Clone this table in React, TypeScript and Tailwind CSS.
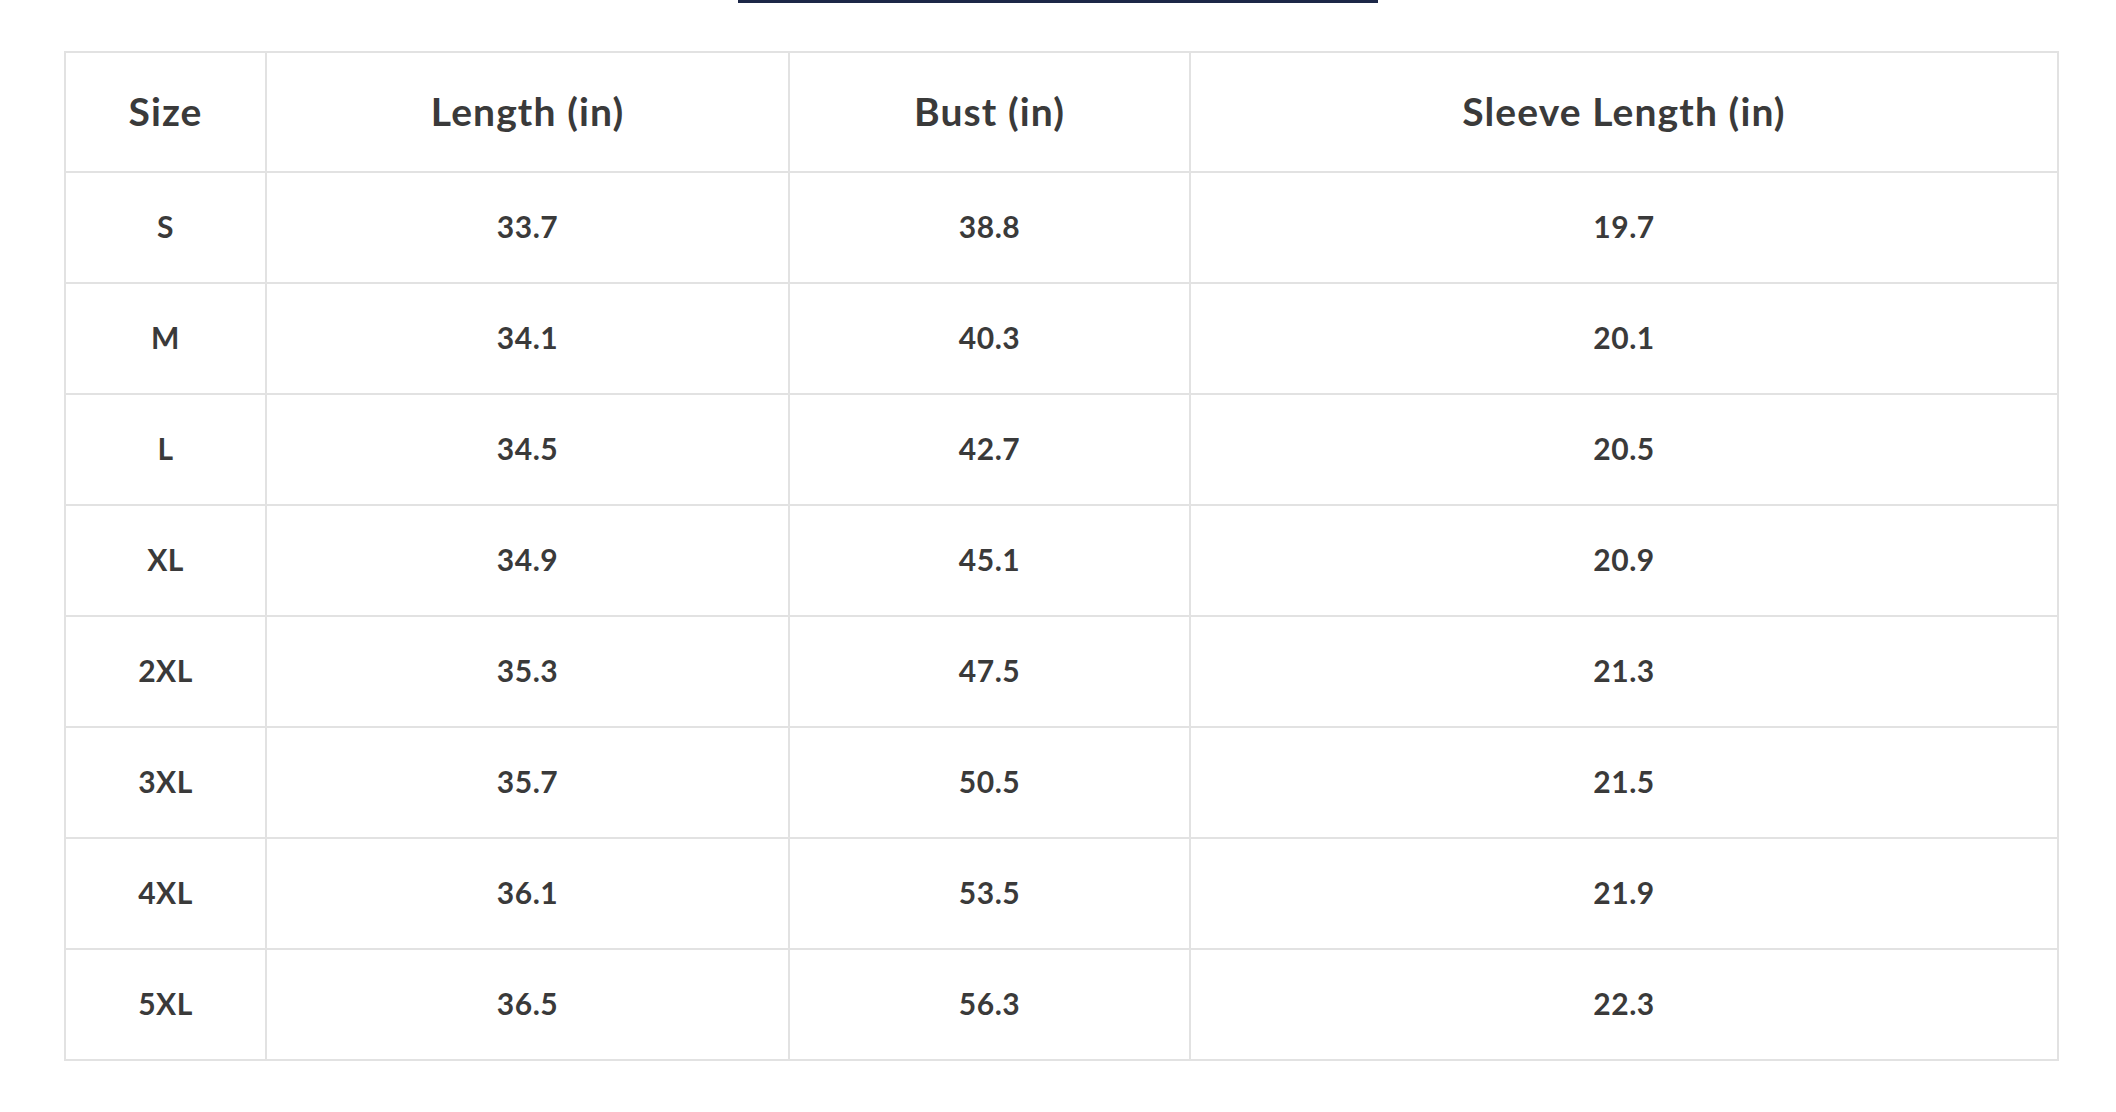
import React from "react";

const headers = ["Size", "Length (in)", "Bust (in)", "Sleeve Length (in)"];
const rows: string[][] = [
  ["S", "33.7", "38.8", "19.7"],
  ["M", "34.1", "40.3", "20.1"],
  ["L", "34.5", "42.7", "20.5"],
  ["XL", "34.9", "45.1", "20.9"],
  ["2XL", "35.3", "47.5", "21.3"],
  ["3XL", "35.7", "50.5", "21.5"],
  ["4XL", "36.1", "53.5", "21.9"],
  ["5XL", "36.5", "56.3", "22.3"],
];

export default function App() {
  return (
    <div className="w-[2116px] h-[1112px] bg-white flex flex-col text-[#3a3a3a]" style={{ fontFamily: "Lato, 'Noto Sans', sans-serif" }}>
      <div className="mx-auto w-[640px] h-[3px] bg-[#1c2747]" />
      <div className="ml-[64px] mt-[48px] w-[1995px] grid grid-cols-[201px_523px_401px_868px] border-t-2 border-l-2 border-[#e2e2e2]">
        {headers.map((h) => (
          <div key={h} className="h-[120px] flex items-center justify-center pb-[2px] border-r-2 border-b-2 border-[#e2e2e2] text-[39px] leading-none font-bold tracking-[1.1px]">
            {h}
          </div>
        ))}
        {rows.map((r) =>
          r.map((c, i) => (
            <div key={r[0] + i} className="h-[111px] flex items-center justify-center pb-[3px] border-r-2 border-b-2 border-[#e2e2e2] text-[30px] leading-none font-bold tracking-[0.5px]">
              {c}
            </div>
          ))
        )}
      </div>
    </div>
  );
}
